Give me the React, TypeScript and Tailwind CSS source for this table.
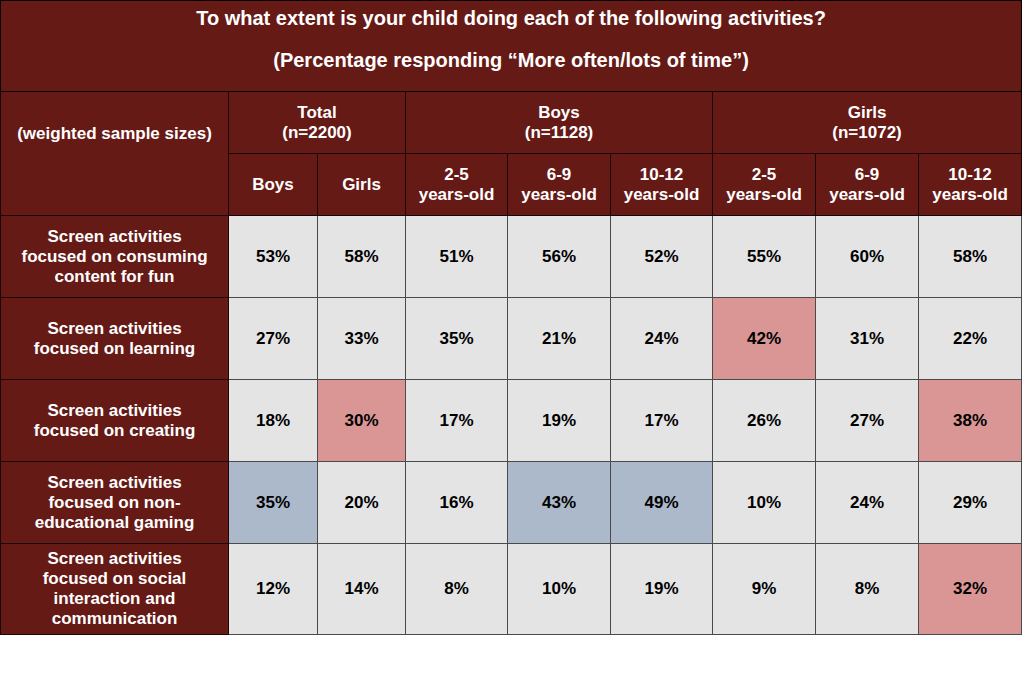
import React from "react";

const font = { fontFamily: '"Liberation Sans", Arial, sans-serif' };

type Cell = { v: string; c?: "p" | "b" };
const rows: { label: string[]; cells: Cell[] }[] = [
  {
    label: ["Screen activities", "focused on consuming", "content for fun"],
    cells: [{ v: "53%" }, { v: "58%" }, { v: "51%" }, { v: "56%" }, { v: "52%" }, { v: "55%" }, { v: "60%" }, { v: "58%" }],
  },
  {
    label: ["Screen activities", "focused on learning"],
    cells: [{ v: "27%" }, { v: "33%" }, { v: "35%" }, { v: "21%" }, { v: "24%" }, { v: "42%", c: "p" }, { v: "31%" }, { v: "22%" }],
  },
  {
    label: ["Screen activities", "focused on creating"],
    cells: [{ v: "18%" }, { v: "30%", c: "p" }, { v: "17%" }, { v: "19%" }, { v: "17%" }, { v: "26%" }, { v: "27%" }, { v: "38%", c: "p" }],
  },
  {
    label: ["Screen activities", "focused on non-", "educational gaming"],
    cells: [{ v: "35%", c: "b" }, { v: "20%" }, { v: "16%" }, { v: "43%", c: "b" }, { v: "49%", c: "b" }, { v: "10%" }, { v: "24%" }, { v: "29%" }],
  },
  {
    label: ["Screen activities", "focused on social", "interaction and", "communication"],
    cells: [{ v: "12%" }, { v: "14%" }, { v: "8%" }, { v: "10%" }, { v: "19%" }, { v: "9%" }, { v: "8%" }, { v: "32%", c: "p" }],
  },
];
const rowHeights = ["h-[82px]", "h-[82px]", "h-[82px]", "h-[82px]", "h-[91px]"];

const hd = "bg-[#661a16] text-white font-bold text-[17px] leading-[20px] text-center align-middle border-[1.5px] border-[#1a0606]";

export default function App() {
  return (
    <div className="w-[1024px] h-[683px] bg-white" style={font}>
      <table className="border-collapse table-fixed w-[1021px]">
        <colgroup>
          <col className="w-[228px]" />
          <col className="w-[89px]" />
          <col className="w-[88px]" />
          <col className="w-[102px]" />
          <col className="w-[103px]" />
          <col className="w-[102px]" />
          <col className="w-[103px]" />
          <col className="w-[103px]" />
          <col className="w-[103px]" />
        </colgroup>
        <tbody>
          <tr className="h-[91px]">
            <td colSpan={9} className="bg-[#661a16] text-white font-bold text-[20px] text-center border-[1.5px] border-[#0a0202] align-top pt-[4px]">
              <div className="leading-[26px]">To what extent is your child doing each of the following activities?</div>
              <div className="leading-[26px] mt-[16px]">(Percentage responding “More often/lots of time”)</div>
            </td>
          </tr>
          <tr className="h-[62px]">
            <td rowSpan={2} className={hd + " pb-[40px]"}>(weighted sample sizes)</td>
            <td colSpan={2} className={hd}>Total<br />(n=2200)</td>
            <td colSpan={3} className={hd}>Boys<br />(n=1128)</td>
            <td colSpan={3} className={hd}>Girls<br />(n=1072)</td>
          </tr>
          <tr className="h-[62px]">
            <td className={hd}>Boys</td>
            <td className={hd}>Girls</td>
            <td className={hd}>2-5<br />years-old</td>
            <td className={hd}>6-9<br />years-old</td>
            <td className={hd}>10-12<br />years-old</td>
            <td className={hd}>2-5<br />years-old</td>
            <td className={hd}>6-9<br />years-old</td>
            <td className={hd}>10-12<br />years-old</td>
          </tr>
          {rows.map((r, i) => (
            <tr key={i} className={rowHeights[i]}>
              <td className={hd}>
                {r.label.map((l, j) => (
                  <div key={j}>{l}</div>
                ))}
              </td>
              {r.cells.map((c, j) => (
                <td
                  key={j}
                  className={
                    "text-center align-middle font-bold text-[17px] text-black border-[1.5px] border-[#4a4a4a] " +
                    (c.c === "p" ? "bg-[#da9694]" : c.c === "b" ? "bg-[#acb9ca]" : "bg-[#e4e4e4]")
                  }
                >
                  {c.v}
                </td>
              ))}
            </tr>
          ))}
        </tbody>
      </table>
    </div>
  );
}
